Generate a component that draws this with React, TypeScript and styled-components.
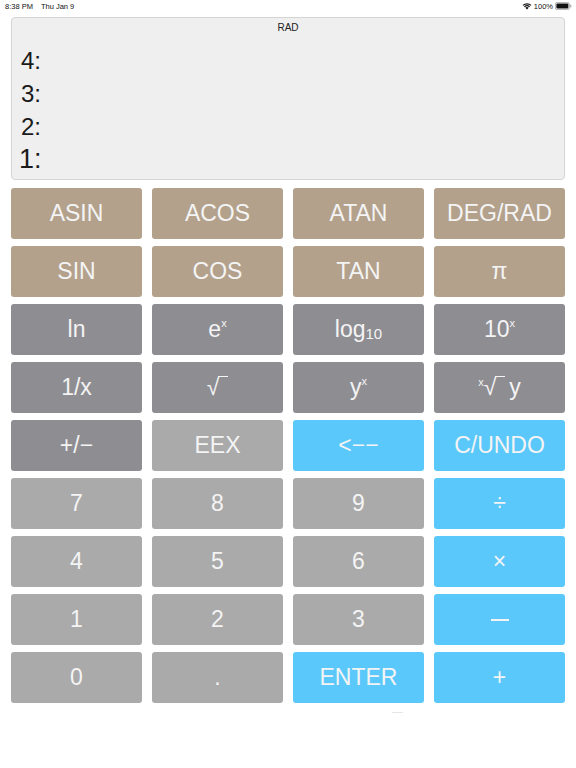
import React from 'react';
import styled, { createGlobalStyle } from 'styled-components';

const GlobalStyle = createGlobalStyle`
  html, body {
    margin: 0;
    padding: 0;
    background: #ffffff;
    font-family: "Liberation Sans", Arial, sans-serif;
  }
`;

const Page = styled.div`
  width: 576px;
  height: 768px;
  padding: 0 11px;
  box-sizing: border-box;
`;

const StatusBar = styled.div`
  height: 12px;
  display: flex;
  align-items: center;
  justify-content: space-between;
  margin: 0 -7px 0 -6px;
  font-size: 7.5px;
  color: #111;
`;

const StatusLeft = styled.div`
  display: flex;
  gap: 8px;
  padding-top: 1px;
`;

const StatusRight = styled.div`
  display: flex;
  align-items: center;
  gap: 2px;
`;

const Display = styled.div`
  margin-top: 5px;
  height: 163px;
  box-sizing: border-box;
  background: #efefef;
  border: 1px solid #d4d4d4;
  border-radius: 4px;
  display: flex;
  flex-direction: column;
`;

const Mode = styled.div`
  text-align: center;
  font-size: 10px;
  color: #222;
  padding-top: 4px;
  height: 14px;
`;

const Registers = styled.div`
  display: flex;
  flex-direction: column;
  padding: 8px 0 0 7px;
`;

const Register = styled.div<{ $big?: boolean }>`
  height: 33px;
  display: flex;
  align-items: center;
  font-size: ${(p) => (p.$big ? '27px' : '24px')};
  color: #1a1a1a;
`;

const RegLabel = styled.span`
  width: 22px;
  text-align: right;
`;

const Keypad = styled.div`
  margin-top: 8px;
  display: grid;
  grid-template-columns: repeat(4, 131px);
  grid-auto-rows: 51px;
  column-gap: 10px;
  row-gap: 7px;
`;

type Tone = 'tan' | 'dark' | 'light' | 'blue';

const toneColors: Record<Tone, string> = {
  tan: '#b3a18c',
  dark: '#8e8d92',
  light: '#aaaaaa',
  blue: '#5ac8fa',
};

const Key = styled.button<{ $tone: Tone }>`
  border: none;
  border-radius: 3px;
  background: ${(p) => toneColors[p.$tone]};
  color: #f4f4f4;
  font-family: "Liberation Sans", Arial, sans-serif;
  font-size: 23px;
  padding: 0;
  display: flex;
  align-items: center;
  justify-content: center;
  cursor: pointer;
`;

const Sup = styled.sup`
  font-size: 11px;
  vertical-align: 10px;
  line-height: 0;
`;

const Sub = styled.span`
  font-size: 15px;
  vertical-align: -2px;
`;

const Root = styled.span`
  display: inline-flex;
  align-items: flex-end;
  font-size: 23px;
  line-height: 1;
`;

const Radicand = styled.span`
  display: inline-block;
  width: 10px;
  height: 20px;
  border-top: 1.5px solid #f4f4f4;
  margin-left: -1px;
  margin-bottom: 2px;
`;

const SmallX = styled.span`
  font-size: 11px;
  align-self: flex-start;
  margin-top: 1px;
  margin-right: 0;
`;

const RootY = styled.span`
  margin-left: 4px;
`;

const MinusBar = styled.span`
  display: inline-block;
  width: 18px;
  height: 2px;
  background: #f4f4f4;
`;

const HomeBar = styled.div`
  margin: 9px 0 0 381px;
  width: 11px;
  height: 1px;
  background: #e6e6e6;
`;

const Wifi = () => (
  <svg width="10" height="8" viewBox="0 0 20 15">
    <path d="M10 14.5 L6.6 11 A5 5 0 0 1 13.4 11 Z" fill="#111" />
    <path d="M3.9 8.3 A9 9 0 0 1 16.1 8.3 L14.4 10 A6.6 6.6 0 0 0 5.6 10 Z" fill="#111" />
    <path d="M1.1 5.5 A13 13 0 0 1 18.9 5.5 L17.2 7.2 A10.6 10.6 0 0 0 2.8 7.2 Z" fill="#111" />
  </svg>
);

const Battery = () => (
  <svg width="17" height="8" viewBox="0 0 34 16">
    <rect x="0.8" y="0.8" width="28" height="14.4" rx="3.5" fill="none" stroke="#999" strokeWidth="1.5" />
    <rect x="2.8" y="2.8" width="24" height="10.4" rx="2" fill="#111" />
    <rect x="30.5" y="5" width="2" height="6" rx="1" fill="#999" />
  </svg>
);

const keys: { tone: Tone; label: React.ReactNode }[] = [
  { tone: 'tan', label: 'ASIN' },
  { tone: 'tan', label: 'ACOS' },
  { tone: 'tan', label: 'ATAN' },
  { tone: 'tan', label: 'DEG/RAD' },
  { tone: 'tan', label: 'SIN' },
  { tone: 'tan', label: 'COS' },
  { tone: 'tan', label: 'TAN' },
  { tone: 'tan', label: 'π' },
  { tone: 'dark', label: 'ln' },
  { tone: 'dark', label: <span>e<Sup>x</Sup></span> },
  { tone: 'dark', label: <span>log<Sub>10</Sub></span> },
  { tone: 'dark', label: <span>10<Sup>x</Sup></span> },
  { tone: 'dark', label: '1/x' },
  { tone: 'dark', label: <Root>√<Radicand /></Root> },
  { tone: 'dark', label: <span>y<Sup>x</Sup></span> },
  {
    tone: 'dark',
    label: (
      <Root>
        <SmallX>x</SmallX>√<Radicand />
        <RootY>y</RootY>
      </Root>
    ),
  },
  { tone: 'dark', label: '+/−' },
  { tone: 'light', label: 'EEX' },
  { tone: 'blue', label: '<−−' },
  { tone: 'blue', label: 'C/UNDO' },
  { tone: 'light', label: '7' },
  { tone: 'light', label: '8' },
  { tone: 'light', label: '9' },
  { tone: 'blue', label: '÷' },
  { tone: 'light', label: '4' },
  { tone: 'light', label: '5' },
  { tone: 'light', label: '6' },
  { tone: 'blue', label: '×' },
  { tone: 'light', label: '1' },
  { tone: 'light', label: '2' },
  { tone: 'light', label: '3' },
  { tone: 'blue', label: <MinusBar aria-label="−" /> },
  { tone: 'light', label: '0' },
  { tone: 'light', label: '.' },
  { tone: 'blue', label: 'ENTER' },
  { tone: 'blue', label: '+' },
];

const App: React.FC = () => {
  return (
    <Page>
      <GlobalStyle />
      <StatusBar>
        <StatusLeft>
          <span>8:38 PM</span>
          <span>Thu Jan 9</span>
        </StatusLeft>
        <StatusRight>
          <Wifi />
          <span>100%</span>
          <Battery />
        </StatusRight>
      </StatusBar>
      <Display>
        <Mode>RAD</Mode>
        <Registers>
          <Register><RegLabel>4:</RegLabel></Register>
          <Register><RegLabel>3:</RegLabel></Register>
          <Register><RegLabel>2:</RegLabel></Register>
          <Register $big><RegLabel>1:</RegLabel></Register>
        </Registers>
      </Display>
      <Keypad>
        {keys.map((k, i) => (
          <Key key={i} $tone={k.tone}>
            {k.label}
          </Key>
        ))}
      </Keypad>
      <HomeBar />
    </Page>
  );
};

export default App;
